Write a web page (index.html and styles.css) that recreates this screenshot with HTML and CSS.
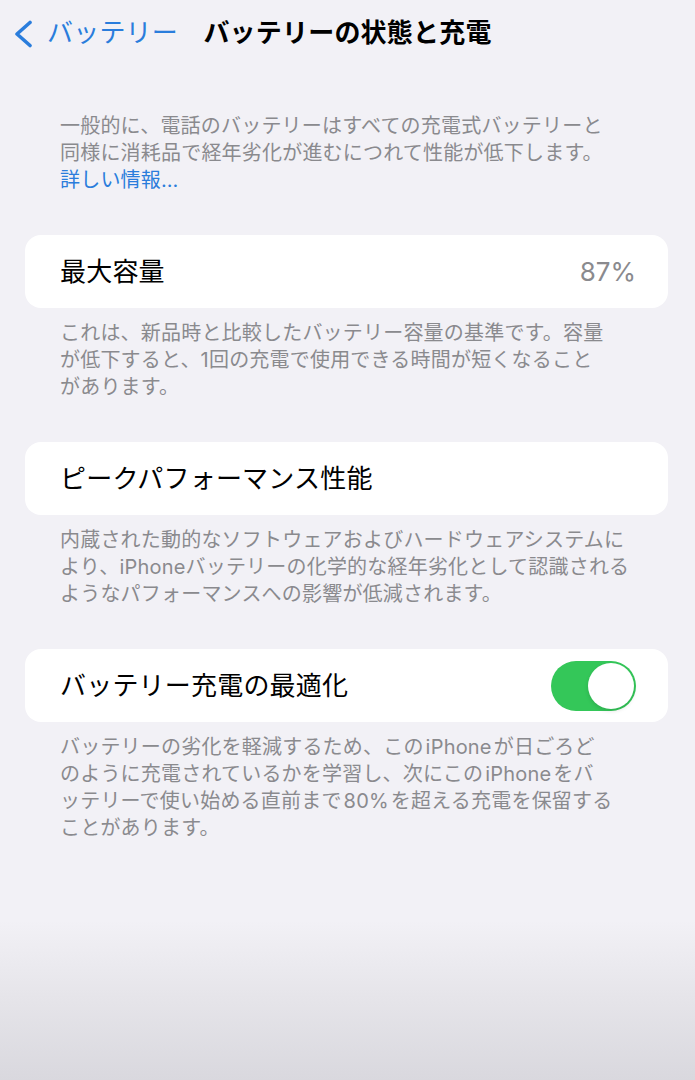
FILE: index.html
```html
<!DOCTYPE html>
<html lang="ja">
<head>
<meta charset="utf-8">
<title>バッテリーの状態と充電</title>
<link rel="stylesheet" href="styles.css">
</head>
<body>
<header class="nav">
  <a class="nav-back" href="#">
    <svg class="chevron" width="20" height="28" viewBox="0 0 20 28" aria-hidden="true">
      <polyline points="17,2.5 4,14 17,25.5" fill="none" stroke="currentColor" stroke-width="3.6" stroke-linecap="round" stroke-linejoin="round"/>
    </svg>
    <span>バッテリー</span>
  </a>
  <h1 class="nav-title">バッテリーの状態と充電</h1>
  <span></span>
</header>

<main class="content">
  <p class="intro">一般的に、電話のバッテリーはすべての充電式バッテリーと<br>同様に消耗品で経年劣化が進むにつれて性能が低下します。<br><a class="link" href="#">詳しい情報…</a></p>

  <section class="group">
    <div class="cell">
      <span class="cell-label">最大容量</span>
      <span class="cell-value">87%</span>
    </div>
    <p class="footer">これは、新品時と比較したバッテリー容量の基準です。容量<br>が低下すると、1回の充電で使用できる時間が短くなること<br>があります。</p>
  </section>

  <section class="group">
    <div class="cell">
      <span class="cell-label">ピークパフォーマンス性能</span>
    </div>
    <p class="footer">内蔵された動的なソフトウェアおよびハードウェアシステムに<br>より、iPhoneバッテリーの化学的な経年劣化として認識される<br>ようなパフォーマンスへの影響が低減されます。</p>
  </section>

  <section class="group">
    <div class="cell">
      <span class="cell-label">バッテリー充電の最適化</span>
      <span class="switch on" role="switch" aria-checked="true"><span class="knob"></span></span>
    </div>
    <p class="footer">バッテリーの劣化を軽減するため、この<span class="latin">iPhone</span>が日ごろど<br>のように充電されているかを学習し、次にこの<span class="latin">iPhone</span>をバ<br>ッテリーで使い始める直前まで<span class="latin">80%</span>を超える充電を保留する<br>ことがあります。</p>
  </section>
</main>
</body>
</html>
```

FILE: styles.css
```css
html, body {
  margin: 0;
  padding: 0;
}

body {
  min-height: 100vh;
  background: linear-gradient(to bottom, #f2f1f6 0, #f2f1f6 920px, #e6e5ea 995px, #d9d8de 1080px);
  font-family: Inter, "Noto Sans CJK JP", sans-serif;
  color: #000;
  -webkit-font-smoothing: antialiased;
}

/* navigation bar */
.nav {
  display: grid;
  grid-template-columns: 1fr auto 1fr;
  align-items: center;
  height: 66px;
  padding: 0 13px;
}

.nav-back {
  display: flex;
  align-items: center;
  gap: 14px;
  color: #2a7ddc;
  text-decoration: none;
  font-size: 26px;
  line-height: 32px;
  letter-spacing: 0.2px;
}

.chevron {
  display: block;
  margin-top: 1px;
}

.nav-title {
  margin: 0;
  font-size: 26px;
  line-height: 32px;
  font-weight: 700;
  letter-spacing: 0.2px;
}

/* page body */
.content {
  padding: 47px 27px 0 25px;
}

.intro,
.footer {
  margin: 0;
  padding: 0 0 0 35px;
  font-size: 20px;
  line-height: 27px;
  letter-spacing: 0.2px;
  color: #8a8a8e;
  white-space: nowrap;
}

.intro {
  margin-bottom: 41px;
}

.link {
  color: #2a7ddc;
  text-decoration: none;
}

.group {
  margin-bottom: 41px;
}

.cell {
  display: flex;
  align-items: center;
  justify-content: space-between;
  height: 73px;
  padding: 0 32px 0 35px;
  background: #fff;
  border-radius: 16px;
}

.cell-label {
  font-size: 26px;
  line-height: 32px;
  letter-spacing: 0.2px;
}

.cell-value {
  font-size: 26px;
  line-height: 32px;
  color: #8a8a8e;
}

.footer {
  padding-top: 12px;
}

.latin {
  margin: 0 2px;
}

/* toggle switch */
.switch {
  position: relative;
  display: block;
  width: 85px;
  height: 50px;
  border-radius: 25px;
  background: #e3e3e8;
}

.switch.on {
  background: #34c759;
}

.knob {
  position: absolute;
  top: 2px;
  right: 2px;
  width: 46px;
  height: 46px;
  border-radius: 50%;
  background: #fff;
  box-shadow: 0 2px 4px rgba(0, 0, 0, 0.12);
}
```
